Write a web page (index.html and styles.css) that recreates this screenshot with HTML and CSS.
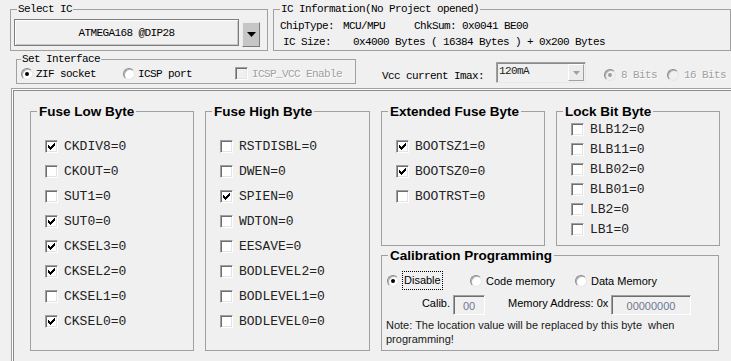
FILE: index.html
```html
<!DOCTYPE html>
<html>
<head>
<meta charset="utf-8">
<link rel="stylesheet" href="styles.css">
</head>
<body>
<div class="app">
  <div class="top-row sys">
    <fieldset class="grp sel-ic">
      <legend class="lg-sys">Select IC</legend>
      <div class="sel-body">
        <div class="big-combo">ATMEGA168 @DIP28</div>
        <div class="drop-btn"><svg width="9" height="5" viewBox="0 0 9 5"><path d="M0 0H9L4.5 5Z" fill="#000"/></svg></div>
      </div>
    </fieldset>
    <fieldset class="grp ic-info">
      <legend class="lg-sys">IC Information(No Project opened)</legend>
      <div class="info-line first"><span class="w-chip">ChipType:</span><span class="w-mcu">MCU/MPU</span><span>ChkSum: 0x0041 BE00</span></div>
      <div class="info-line l2"><span class="w-size">IC Size:</span><span>0x4000 Bytes ( 16384 Bytes ) + 0x200 Bytes</span></div>
    </fieldset>
  </div>

  <div class="iface-row sys">
    <fieldset class="grp iface">
      <legend class="lg-sys">Set Interface</legend>
      <div class="iface-body">
        <span class="radio on"></span><span class="t t-zif">ZIF socket</span>
        <span class="radio r-icsp"></span><span class="t t-icsp">ICSP port</span>
        <span class="cb dis c-vcc"></span><span class="t gray t-vcc">ICSP_VCC Enable</span>
      </div>
    </fieldset>
    <span class="vcc-label">Vcc current Imax:</span>
    <div class="vcc-combo"><span class="vcc-text">120mA</span><span class="small-btn"><svg width="7" height="4" viewBox="0 0 7 4"><path d="M0 0H7L3.5 4Z" fill="#a0a0a0"/></svg></span></div>
    <div class="bits">
      <span class="radio dis on"></span><span class="gray b-t">8 Bits</span>
      <span class="radio dis r-16"></span><span class="gray b-t">16 Bits</span>
    </div>
  </div>

  <div class="main">
    <fieldset class="grp fz low">
      <legend class="lg">Fuse Low Byte</legend>
      <div class="cb-list">
        <div class="cbr"><span class="cb on"><svg width="11" height="11" viewBox="0 0 11 11" shape-rendering="crispEdges"><path d="M8 2h1v1h-1zM7 3h2v1h-2zM2 4h1v1h-1zM6 4h3v1h-3zM2 5h2v1h-2zM5 5h3v1h-3zM2 6h5v1h-5zM3 7h3v1h-3zM4 8h1v1h-1z" fill="#000"/></svg></span><span class="lbl">CKDIV8=0</span></div>
        <div class="cbr"><span class="cb"></span><span class="lbl">CKOUT=0</span></div>
        <div class="cbr"><span class="cb"></span><span class="lbl">SUT1=0</span></div>
        <div class="cbr"><span class="cb on"><svg width="11" height="11" viewBox="0 0 11 11" shape-rendering="crispEdges"><path d="M8 2h1v1h-1zM7 3h2v1h-2zM2 4h1v1h-1zM6 4h3v1h-3zM2 5h2v1h-2zM5 5h3v1h-3zM2 6h5v1h-5zM3 7h3v1h-3zM4 8h1v1h-1z" fill="#000"/></svg></span><span class="lbl">SUT0=0</span></div>
        <div class="cbr"><span class="cb on"><svg width="11" height="11" viewBox="0 0 11 11" shape-rendering="crispEdges"><path d="M8 2h1v1h-1zM7 3h2v1h-2zM2 4h1v1h-1zM6 4h3v1h-3zM2 5h2v1h-2zM5 5h3v1h-3zM2 6h5v1h-5zM3 7h3v1h-3zM4 8h1v1h-1z" fill="#000"/></svg></span><span class="lbl">CKSEL3=0</span></div>
        <div class="cbr"><span class="cb on"><svg width="11" height="11" viewBox="0 0 11 11" shape-rendering="crispEdges"><path d="M8 2h1v1h-1zM7 3h2v1h-2zM2 4h1v1h-1zM6 4h3v1h-3zM2 5h2v1h-2zM5 5h3v1h-3zM2 6h5v1h-5zM3 7h3v1h-3zM4 8h1v1h-1z" fill="#000"/></svg></span><span class="lbl">CKSEL2=0</span></div>
        <div class="cbr"><span class="cb"></span><span class="lbl">CKSEL1=0</span></div>
        <div class="cbr"><span class="cb on"><svg width="11" height="11" viewBox="0 0 11 11" shape-rendering="crispEdges"><path d="M8 2h1v1h-1zM7 3h2v1h-2zM2 4h1v1h-1zM6 4h3v1h-3zM2 5h2v1h-2zM5 5h3v1h-3zM2 6h5v1h-5zM3 7h3v1h-3zM4 8h1v1h-1z" fill="#000"/></svg></span><span class="lbl">CKSEL0=0</span></div>
      </div>
    </fieldset>

    <fieldset class="grp fz high">
      <legend class="lg">Fuse High Byte</legend>
      <div class="cb-list">
        <div class="cbr"><span class="cb"></span><span class="lbl">RSTDISBL=0</span></div>
        <div class="cbr"><span class="cb"></span><span class="lbl">DWEN=0</span></div>
        <div class="cbr"><span class="cb on"><svg width="11" height="11" viewBox="0 0 11 11" shape-rendering="crispEdges"><path d="M8 2h1v1h-1zM7 3h2v1h-2zM2 4h1v1h-1zM6 4h3v1h-3zM2 5h2v1h-2zM5 5h3v1h-3zM2 6h5v1h-5zM3 7h3v1h-3zM4 8h1v1h-1z" fill="#000"/></svg></span><span class="lbl">SPIEN=0</span></div>
        <div class="cbr"><span class="cb"></span><span class="lbl">WDTON=0</span></div>
        <div class="cbr"><span class="cb"></span><span class="lbl">EESAVE=0</span></div>
        <div class="cbr"><span class="cb"></span><span class="lbl">BODLEVEL2=0</span></div>
        <div class="cbr"><span class="cb"></span><span class="lbl">BODLEVEL1=0</span></div>
        <div class="cbr"><span class="cb"></span><span class="lbl">BODLEVEL0=0</span></div>
      </div>
    </fieldset>

    <div class="right-col">
      <div class="right-top">
        <fieldset class="grp ext">
          <legend class="lg">Extended Fuse Byte</legend>
          <div class="cb-list">
            <div class="cbr"><span class="cb on"><svg width="11" height="11" viewBox="0 0 11 11" shape-rendering="crispEdges"><path d="M8 2h1v1h-1zM7 3h2v1h-2zM2 4h1v1h-1zM6 4h3v1h-3zM2 5h2v1h-2zM5 5h3v1h-3zM2 6h5v1h-5zM3 7h3v1h-3zM4 8h1v1h-1z" fill="#000"/></svg></span><span class="lbl">BOOTSZ1=0</span></div>
            <div class="cbr"><span class="cb on"><svg width="11" height="11" viewBox="0 0 11 11" shape-rendering="crispEdges"><path d="M8 2h1v1h-1zM7 3h2v1h-2zM2 4h1v1h-1zM6 4h3v1h-3zM2 5h2v1h-2zM5 5h3v1h-3zM2 6h5v1h-5zM3 7h3v1h-3zM4 8h1v1h-1z" fill="#000"/></svg></span><span class="lbl">BOOTSZ0=0</span></div>
            <div class="cbr"><span class="cb"></span><span class="lbl">BOOTRST=0</span></div>
          </div>
        </fieldset>
        <fieldset class="grp lock">
          <legend class="lg">Lock Bit Byte</legend>
          <div class="cb-list">
            <div class="cbr"><span class="cb"></span><span class="lbl">BLB12=0</span></div>
            <div class="cbr"><span class="cb"></span><span class="lbl">BLB11=0</span></div>
            <div class="cbr"><span class="cb"></span><span class="lbl">BLB02=0</span></div>
            <div class="cbr"><span class="cb"></span><span class="lbl">BLB01=0</span></div>
            <div class="cbr"><span class="cb"></span><span class="lbl">LB2=0</span></div>
            <div class="cbr"><span class="cb"></span><span class="lbl">LB1=0</span></div>
          </div>
        </fieldset>
      </div>
      <fieldset class="grp calib">
        <legend class="lg">Calibration Programming</legend>
        <div class="cal-body">
          <div class="cal-radios">
            <div class="opt opt1"><span class="radio on"></span><span class="focus">Disable</span></div>
            <div class="opt opt2"><span class="radio"></span><span class="ot">Code memory</span></div>
            <div class="opt"><span class="radio"></span><span class="ot">Data Memory</span></div>
          </div>
          <div class="cal-row2">
            <span class="calib-lbl">Calib.</span>
            <div class="inp in-small">00</div>
            <span class="mem-lbl">Memory Address: 0x</span>
            <div class="inp in-big">00000000</div>
          </div>
          <div class="note">Note: The location value will be replaced by this byte&nbsp; when<br>programming!</div>
        </div>
      </fieldset>
    </div>
  </div>
</div>
</body>
</html>
```

FILE: styles.css
```css
html, body {
  margin: 0;
  padding: 0;
}
body {
  width: 731px;
  height: 361px;
  overflow: hidden;
  background: #f0f0f0;
}

.sys {
  font-family: "Liberation Mono", monospace;
  font-size: 11px;
  letter-spacing: -0.6px;
  color: #000;
}

.grp {
  margin: 0;
  padding: 0;
  border: 1px solid #a0a0a0;
  box-sizing: border-box;
  min-width: 0;
}

.lg-sys {
  padding: 0 1px;
  line-height: 12px;
}

/* top row */
.top-row {
  display: flex;
  padding-top: 3px;
}
.sel-ic {
  margin-left: 10px;
  width: 258px;
  height: 48px;
}
.sel-ic legend { margin-left: 6px; }
.sel-body {
  display: flex;
  align-items: flex-start;
  padding: 4px 0 0 3px;
}
.big-combo {
  width: 225px;
  height: 27px;
  box-sizing: border-box;
  border: 1px solid #7d7d7d;
  box-shadow: inset 1px 1px 0 #fff, inset -1px -1px 0 #c8c8c8;
  display: flex;
  align-items: center;
  justify-content: center;
  background: #f0f0f0;
}
.drop-btn {
  margin: 3px 0 0 3px;
  width: 18px;
  height: 25px;
  box-sizing: border-box;
  background: #c6c6c6;
  border: 1px solid;
  border-color: #ececec #7a7a7a #7a7a7a #ececec;
  display: flex;
  align-items: center;
  justify-content: center;
}

.ic-info {
  margin-left: 5px;
  width: 458px;
  height: 48px;
}
.ic-info legend { margin-left: 6px; }
.info-line {
  display: flex;
  height: 16px;
  line-height: 16px;
  padding-left: 6px;
  white-space: pre;
}
.info-line.first { margin-top: 3px; }
.info-line.l2 { padding-left: 9px; }
.w-chip { width: 63px; flex: none; }
.w-mcu { width: 71px; flex: none; }
.w-size { width: 70px; flex: none; }

/* interface row */
.iface-row {
  display: flex;
  align-items: flex-start;
  margin-top: 2px;
  height: 31px;
}
.iface {
  margin-left: 16px;
  width: 340px;
  height: 31px;
}
.iface legend { margin-left: 4px; }
.iface-body {
  display: flex;
  align-items: center;
  height: 17px;
  padding-left: 4px;
  white-space: nowrap;
}
.t-zif { margin-left: 3px; width: 60px; }
.r-icsp { margin-left: 27px; }
.t-icsp { margin-left: 3px; width: 54px; }
.c-vcc { margin-left: 43px; }
.t-vcc { margin-left: 4px; }

.vcc-label {
  margin: 15px 0 0 26px;
  line-height: 16px;
  white-space: nowrap;
}
.vcc-combo {
  margin: 9px 0 0 12px;
  width: 90px;
  height: 21px;
  box-sizing: border-box;
  border: 1px solid;
  border-color: #a0a0a0 #e8e8e8 #e8e8e8 #a0a0a0;
  box-shadow: inset 1px 1px 0 #8a8a8a;
  background: #f0f0f0;
  display: flex;
}
.vcc-text {
  flex: 1;
  padding: 2px 0 0 2px;
  line-height: 12px;
  color: #222;
}
.small-btn {
  width: 16px;
  height: 17px;
  margin: 1px 1px 0 0;
  box-sizing: border-box;
  border: 1px solid;
  border-color: #fff #a0a0a0 #a0a0a0 #fff;
  background: #ececec;
  display: flex;
  align-items: center;
  justify-content: center;
}
.bits {
  display: flex;
  align-items: center;
  height: 16px;
  margin: 14px 0 0 18px;
  white-space: nowrap;
}
.b-t { margin-left: 5px; }
.r-16 { margin-left: 10px; }

.gray {
  color: #a0a0a0;
  text-shadow: 1px 1px 0 #fff;
}

/* controls */
.cb {
  width: 13px;
  height: 13px;
  box-sizing: border-box;
  flex: none;
  background: #fff;
  border: 1px solid;
  border-color: #a0a0a0 #fff #fff #a0a0a0;
  box-shadow: inset 1px 1px 0 #6e6e6e, inset -1px -1px 0 #e3e3e3;
  display: flex;
}
.cb svg { display: block; }
.cb.dis { background: #f0f0f0; }

.radio {
  width: 12px;
  height: 12px;
  box-sizing: border-box;
  flex: none;
  border-radius: 50%;
  background: #fff;
  border: 1px solid;
  border-color: #8a8a8a #e6e6e6 #e6e6e6 #8a8a8a;
  box-shadow: inset 1px 1px 0 #b0b0b0;
  display: flex;
  align-items: center;
  justify-content: center;
}
.radio.on::after {
  content: "";
  width: 4px;
  height: 4px;
  border-radius: 50%;
  background: #000;
}
.radio.dis { background: #f0f0f0; }
.radio.dis.on::after { background: #a0a0a0; }

/* main panel */
.main {
  margin: 4px -20px 0 11px;
  height: 290px;
  box-sizing: border-box;
  border: 1px solid #a0a0a0;
  box-shadow: inset 0 0 0 1px #fff, inset 0 0 0 2px #8c8c8c;
  padding: 15px 0 0 18px;
  display: flex;
  align-items: flex-start;
  gap: 11px;
}
.lg {
  font-family: "Liberation Sans", Arial, sans-serif;
  font-weight: bold;
  font-size: 13.5px;
  line-height: 15px;
  padding: 0 2px;
  margin-left: 6px;
  color: #000;
}
.fz { height: 247px; flex: none; }
.low { width: 164px; }
.high { width: 165px; }
.right-col {
  display: flex;
  flex-direction: column;
  gap: 2px;
  width: 339px;
  flex: none;
}
.right-top {
  display: flex;
  gap: 11px;
}
.ext, .lock {
  width: 164px;
  height: 142px;
  flex: none;
}
.calib {
  width: 338px;
  height: 103px;
}

.cb-list { padding: 15px 0 0 14px; }
.cbr {
  display: flex;
  align-items: center;
  height: 25px;
}
.lock .cb-list { padding-top: 0; }
.lock .cbr { height: 20px; }
.lbl {
  margin-left: 6px;
  font-family: "Liberation Mono", monospace;
  font-size: 13px;
  color: #222;
  white-space: nowrap;
}

/* calibration */
.cal-body {
  padding: 8px 0 0 5px;
  font-family: "Liberation Sans", Arial, sans-serif;
  font-size: 11px;
  color: #000;
}
.cal-radios {
  display: flex;
  align-items: center;
  height: 19px;
}
.opt {
  display: flex;
  align-items: center;
  white-space: nowrap;
}
.opt1 { width: 83px; }
.opt2 { width: 105px; }
.focus {
  margin-left: 3px;
  border: 1px dotted #000;
  padding: 0 1px;
  line-height: 17px;
}
.ot { margin-left: 4px; }
.cal-row2 {
  display: flex;
  align-items: flex-start;
  margin-top: 5px;
  height: 20px;
}
.calib-lbl {
  width: 63px;
  text-align: right;
  margin-right: 3px;
  line-height: 16px;
}
.mem-lbl {
  margin-left: 23px;
  width: 100px;
  margin-right: 3px;
  line-height: 16px;
  white-space: nowrap;
}
.inp {
  height: 20px;
  box-sizing: border-box;
  border: 1px solid;
  border-color: #a0a0a0 #fff #fff #a0a0a0;
  box-shadow: inset 1px 1px 0 #6e6e6e;
  background: #f0f0f0;
  color: #6d7890;
  text-align: center;
  padding-top: 3px;
  line-height: 15px;
}
.in-small { width: 32px; }
.in-big { width: 80px; }
.note {
  margin: 4px 0 0 -1px;
  line-height: 13.5px;
  color: #1a1a1a;
  white-space: nowrap;
}
```
